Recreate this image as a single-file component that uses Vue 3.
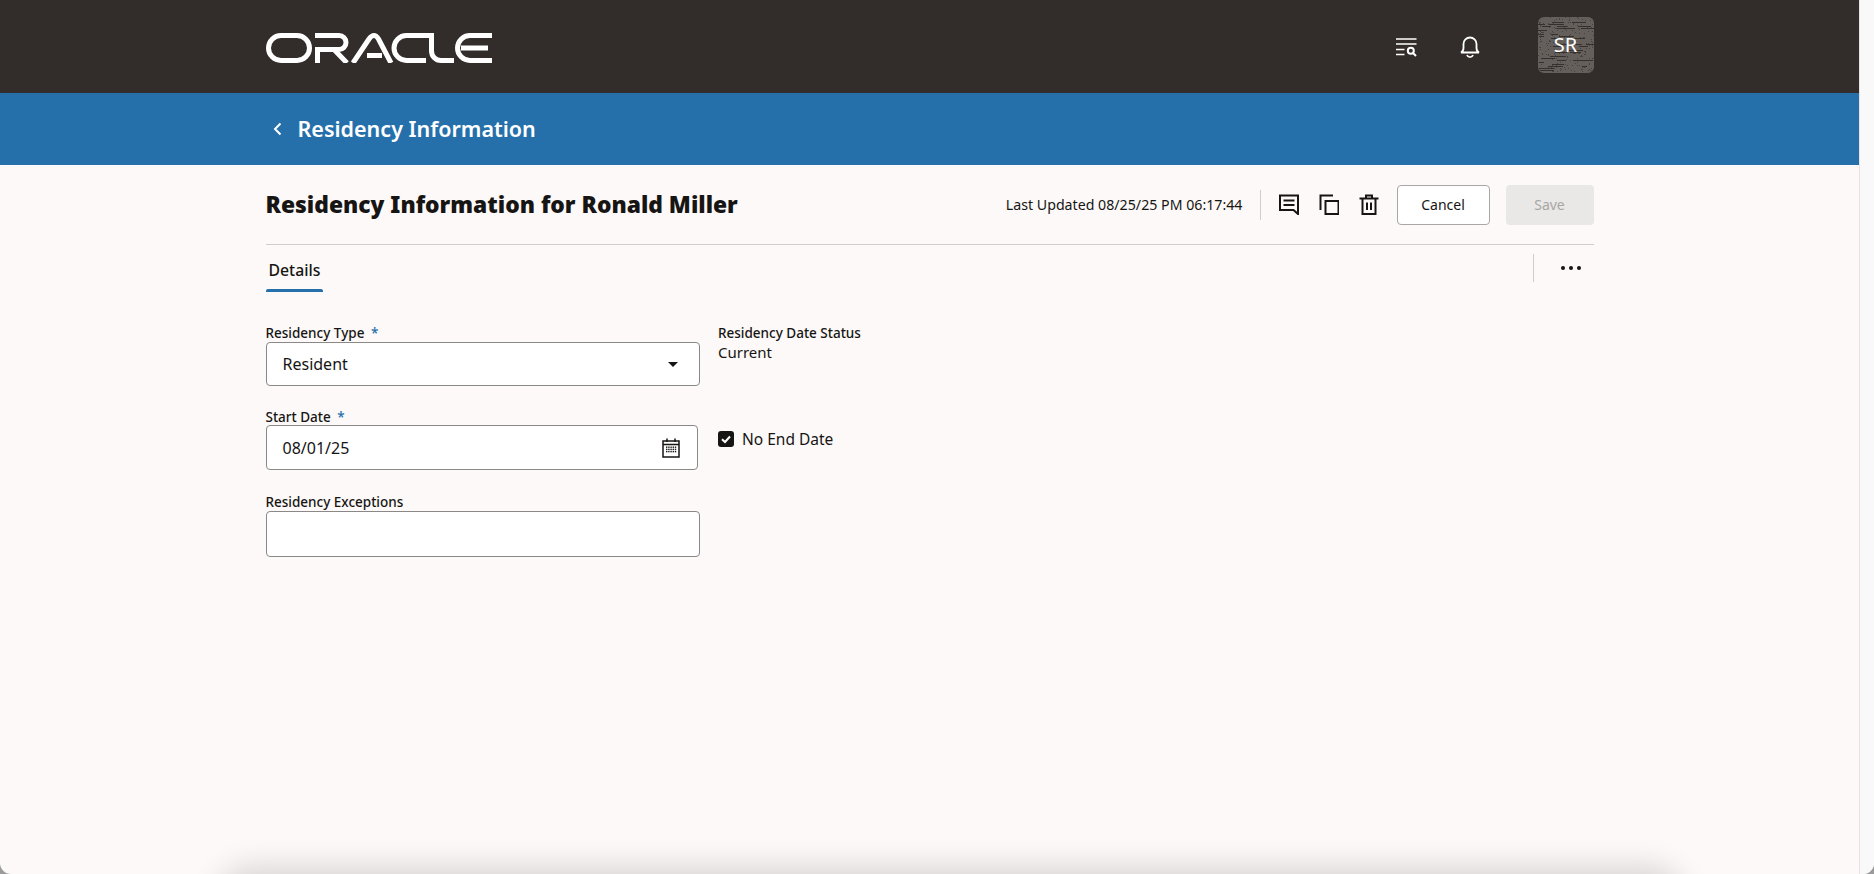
<script setup>
function rng(seed) {
  let s = seed
  return () => {
    s = (s * 9301 + 49297) % 233280
    return s / 233280
  }
}
const r = rng(17)
const dashes = Array.from({ length: 44 }, () => ({
  x: Math.floor(r() * 50),
  y: Math.floor(r() * 27) * 2 + 1,
  w: 5 + Math.floor(r() * 11)
}))
const dots = Array.from({ length: 220 }, () => ({
  x: Math.floor(r() * 56),
  y: Math.floor(r() * 56)
}))
const calendarCells = []
for (let row = 0; row < 3; row++) {
  for (let col = 0; col < 5; col++) {
    calendarCells.push({ x: 4 + col * 2.2, y: 8.5 + row * 2.2 })
  }
}
</script>

<template>
  <div class="window">
    <div class="main">
      <header class="brandbar">
        <div class="container brand-inner">
          <svg class="logo" viewBox="0 0 226 30" fill="none" stroke="#fff" stroke-width="5" role="img" aria-label="Oracle logo">
            <rect x="2.500" y="2.500" width="41" height="25" rx="12.500" />
            <path d="M49 2.500H73a7 7 0 0 1 0 14H51.500M51.500 14V30M68 16.500L81 30" />
            <path d="M87 30L103 6Q105.500 2.500 108 2.500Q110.500 2.500 112.500 6L125 30" stroke-linejoin="round" />
            <path d="M101 22.500H116" />
            <path d="M163 2.500H140.500a12.500 12.500 0 0 0 0 25H160" />
            <path d="M165.500 0V18a9.500 9.500 0 0 0 9.500 9.500H188" />
            <path d="M226 2.500H204a12.500 12.500 0 0 0 0 25H226M195 15H222" />
          </svg>
          <div class="brand-actions">
            <svg class="ic-list" viewBox="0 0 21 19" fill="none" stroke="#fff">
              <path d="M0 1H20.500M0 6H20.500M0 11.500H8.500M0 16.500H8.500" stroke-width="1.700" />
              <circle cx="14.800" cy="12.800" r="3" stroke-width="2" />
              <path d="M17 15L20 18" stroke-width="2" />
            </svg>
            <svg class="ic-bell" viewBox="0 0 20 22" fill="none" stroke="#fff" stroke-width="1.800">
              <path d="M1 16.500C3 15.500 3.500 14 3.500 12V8a6.500 6.500 0 0 1 13 0v4C16.500 14 17 15.500 19 16.500Z" />
              <path d="M7 19a3.200 3.200 0 0 0 6 0" />
            </svg>
            <div class="avatar">
              <svg class="avatar-tex" viewBox="0 0 56 56" aria-hidden="true">
                <rect v-for="(d, i) in dots" :key="'d' + i" :x="d.x" :y="d.y" width="1" height="1" fill="#46413e" />
                <rect v-for="(d, i) in dashes" :key="'l' + i" :x="d.x" :y="d.y" :width="d.w" height="1" fill="#35302d" />
              </svg>
              <span class="avatar-text">SR</span>
            </div>
          </div>
        </div>
      </header>

      <div class="pagebar">
        <div class="container pagebar-inner">
          <svg class="chevron" viewBox="0 0 9 14" fill="none" stroke="#fff" stroke-width="2">
            <path d="M7.500 1.500L2 7L7.500 12.500" />
          </svg>
          <h1 class="pagebar-title">Residency Information</h1>
        </div>
      </div>

      <main class="container content">
        <div class="titlerow">
          <h2 class="title">Residency Information for Ronald Miller</h2>
          <div class="toolbar">
            <span class="updated">Last Updated 08/25/25 PM 06:17:44</span>
            <span class="vrule"></span>
            <svg class="tool" viewBox="0 0 20 21" fill="none" stroke="#161513" stroke-width="2">
              <path d="M1 1.500H19V20L14.500 16H1Z" />
              <path d="M4.500 6.500H15.500M4.500 11H15.500" />
            </svg>
            <svg class="tool" viewBox="0 0 20 21" fill="none" stroke="#161513" stroke-width="2">
              <path d="M14 1.500H1.500V16" />
              <rect x="6.500" y="7" width="13" height="13" />
            </svg>
            <svg class="tool" viewBox="0 0 20 21" fill="none" stroke="#161513" stroke-width="2">
              <path d="M7 4V1.500H13V4M0.500 4.500H19.500M3.500 4.500V20H16.500V4.500M8 8.500V16M12 8.500V16" />
            </svg>
            <button class="btn btn-cancel" type="button">Cancel</button>
            <button class="btn btn-save" type="button" disabled>Save</button>
          </div>
        </div>

        <div class="tabrow">
          <div class="tab">Details</div>
          <div class="tab-actions">
            <span class="vrule tall"></span>
            <span class="more"><i></i><i></i><i></i></span>
          </div>
        </div>

        <form class="form" @submit.prevent>
          <div class="col-left">
            <div class="field">
              <label class="label">Residency Type <span class="req">*</span></label>
              <div class="input select">
                <span>Resident</span>
                <span class="caret"></span>
              </div>
            </div>
            <div class="field field-date">
              <label class="label">Start Date <span class="req">*</span></label>
              <div class="input date">
                <span>08/01/25</span>
                <svg class="ic-cal" viewBox="0 0 18 20" fill="none" stroke="#161513">
                  <rect x="1" y="3" width="16" height="16" stroke-width="1.500" />
                  <path d="M1 6.500H17" stroke-width="1.500" />
                  <path d="M5 0.500V4M13 0.500V4" stroke-width="1.500" />
                  <rect v-for="(c, i) in calendarCells" :key="i" :x="c.x" :y="c.y" width="1.400" height="1.400" fill="#161513" stroke="none" />
                </svg>
              </div>
            </div>
            <div class="field field-exc">
              <label class="label">Residency Exceptions</label>
              <div class="input exceptions"></div>
            </div>
          </div>
          <div class="col-right">
            <div class="readonly">
              <div class="label">Residency Date Status</div>
              <div class="value">Current</div>
            </div>
            <div class="check">
              <span class="box">
                <svg viewBox="0 0 16 16" fill="none" stroke="#fff" stroke-width="2"><path d="M4 8.200L7 11L12 5.500" /></svg>
              </span>
              <span>No End Date</span>
            </div>
          </div>
        </form>
      </main>
      <div class="dock-shadow"></div>
    </div>
    <div class="scrollbar"></div>
  </div>
</template>

<style>
html, body {
  margin: 0;
  background: #9b9b9b;
}
</style>

<style scoped>
.window {
  display: flex;
  height: 874px;
  overflow: hidden;
  border-radius: 0 0 11px 11px;
  background: #fcf9f8;
  font-family: "Noto Sans", "Open Sans", sans-serif;
  color: #161513;
}
.main {
  position: relative;
  flex: 1;
  min-width: 0;
  overflow: hidden;
}
.scrollbar {
  width: 14px;
  background: #f9f9f9;
  border-left: 1px solid #e6e4e3;
}
.container {
  width: 1328px;
  margin: 0 auto;
}
.brandbar {
  height: 93px;
  background: #322d2a;
}
.brand-inner {
  display: flex;
  align-items: center;
  justify-content: space-between;
  height: 100%;
}
.logo {
  width: 226px;
  height: 30px;
  margin-top: 3px;
}
.brand-actions {
  display: flex;
  align-items: center;
  margin-bottom: 3px;
}
.ic-list {
  width: 21px;
  height: 19px;
  margin-top: 5px;
  margin-left: 1px;
}
.ic-bell {
  width: 20px;
  height: 22px;
  margin-left: 43px;
  margin-top: 4px;
}
.avatar {
  position: relative;
  display: flex;
  align-items: center;
  justify-content: center;
  width: 56px;
  height: 56px;
  margin-left: 58px;
  border-radius: 6px;
  overflow: hidden;
  background: #645f5b;
}
.avatar-tex {
  position: absolute;
  inset: 0;
  width: 56px;
  height: 56px;
}
.avatar-text {
  position: relative;
  color: #fff;
  font-size: 20px;
  line-height: 1;
}
.pagebar {
  height: 72px;
  background: #2570aa;
}
.pagebar-inner {
  display: flex;
  align-items: center;
  height: 100%;
}
.chevron {
  width: 9px;
  height: 14px;
  margin-left: 7px;
}
.pagebar-title {
  margin: 0 0 0 16px;
  color: #fff;
  font-size: 21.500px;
  font-weight: 600;
  line-height: 28px;
}
.titlerow {
  display: flex;
  align-items: center;
  justify-content: space-between;
  height: 79px;
  border-bottom: 1px solid #cfcecc;
}
.title {
  margin: 0;
  font-size: 22.800px;
  font-weight: 900;
  line-height: 30px;
}
.toolbar {
  display: flex;
  align-items: center;
}
.updated {
  font-size: 14.200px;
  line-height: 20px;
}
.vrule {
  display: block;
  width: 1px;
  height: 30px;
  margin: 0 18px 0 17px;
  background: #cfcecc;
}
.tool {
  width: 20px;
  height: 21px;
  margin-right: 20px;
}
.tool:nth-of-type(3) {
  margin-right: 18px;
}
.btn {
  height: 40px;
  border-radius: 4px;
  padding: 0;
  font-family: inherit;
  font-size: 14px;
}
.btn-cancel {
  width: 93px;
  background: #fff;
  border: 1px solid #a9a7a5;
  color: #161513;
}
.btn-save {
  width: 88px;
  margin-left: 16px;
  background: #e9e8e7;
  border: none;
  color: #a8a6a4;
}
.tabrow {
  display: flex;
  justify-content: space-between;
  height: 47px;
}
.tab {
  position: relative;
  width: 57px;
  padding: 14px 0 0 3px;
  box-sizing: border-box;
  font-size: 15.800px;
  font-weight: 500;
  line-height: 22px;
}
.tab::after {
  content: "";
  position: absolute;
  left: 0;
  right: 0;
  bottom: 0;
  height: 3px;
  border-radius: 2px 2px 0 0;
  background: #2570aa;
}
.tab-actions {
  display: flex;
  align-items: center;
  height: 47px;
  padding-bottom: 10px;
  box-sizing: border-box;
  padding-top: 8px;
}
.vrule.tall {
  height: 28px;
  margin: 0 27px 0 0;
}
.more {
  display: flex;
  gap: 4px;
  margin-right: 13px;
}
.more i {
  display: block;
  width: 4px;
  height: 4px;
  border-radius: 50%;
  background: #161513;
}
.form {
  display: flex;
  gap: 18.500px;
  margin-top: 33px;
}
.col-left {
  display: flex;
  flex-direction: column;
  width: 434px;
}
.label {
  display: block;
  height: 16px;
  font-size: 13.500px;
  font-weight: 500;
  line-height: 16px;
}
.req {
  margin-left: 3px;
  color: #2570aa;
}
.input {
  display: flex;
  align-items: center;
  justify-content: space-between;
  box-sizing: border-box;
  background: #fff;
  border: 1px solid #8b8987;
  border-radius: 4px;
  padding: 0 16px;
  font-size: 16px;
}
.field .select {
  height: 44px;
  margin-top: 1px;
}
.caret {
  width: 0;
  height: 0;
  margin-right: 5px;
  border-left: 5px solid transparent;
  border-right: 5px solid transparent;
  border-top: 5px solid #161513;
}
.field-date {
  margin-top: 23px;
}
.field .date {
  width: 432px;
  height: 45px;
  margin-top: 0;
}
.ic-cal {
  width: 18px;
  height: 20px;
  margin-right: 1px;
}
.field-exc {
  margin-top: 24px;
}
.field .exceptions {
  height: 46px;
  margin-top: 1px;
}
.col-right {
  display: flex;
  flex-direction: column;
}
.value {
  font-size: 15px;
  line-height: 20px;
  margin-top: 1px;
}
.check {
  display: flex;
  align-items: center;
  gap: 8px;
  margin-top: 67px;
  font-size: 15.500px;
  line-height: 20px;
}
.box {
  display: block;
  width: 16px;
  height: 16px;
  border-radius: 3px;
  background: #161513;
}
.box svg {
  display: block;
  width: 16px;
  height: 16px;
}
.dock-shadow {
  position: absolute;
  left: 232px;
  right: 190px;
  top: 886px;
  height: 40px;
  border-radius: 20px;
  box-shadow: 0 -4px 30px 16px rgba(0, 0, 0, 0.14);
}
</style>
